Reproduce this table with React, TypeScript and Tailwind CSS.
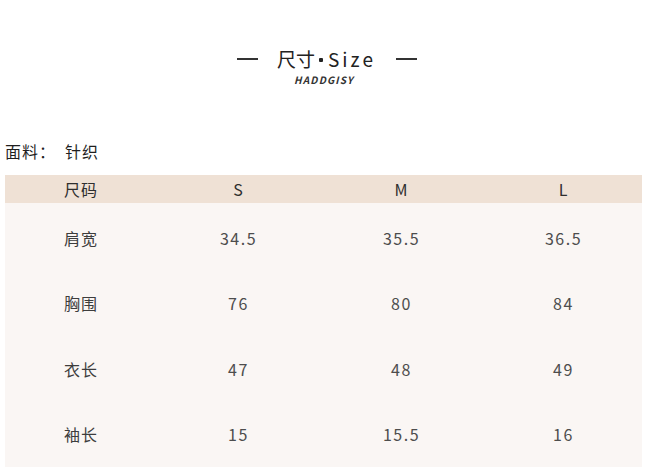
import React from "react";

const rows = [
  { label: "肩宽", v: ["34.5", "35.5", "36.5"] },
  { label: "胸围", v: ["76", "80", "84"] },
  { label: "衣长", v: ["47", "48", "49"] },
  { label: "袖长", v: ["15", "15.5", "16"] },
];

export default function App() {
  return (
    <div
      className="w-[647px] h-[468px] bg-white overflow-hidden flex flex-col"
      style={{ fontFamily: '"Noto Sans CJK SC", "Noto Sans", sans-serif' }}
    >
      <div className="pt-[48px] flex items-center h-[70px] text-[#222]">
        <div className="ml-[237px] w-[21px] h-[1.5px] bg-[#333]" />
        <div className="ml-[19px] flex items-center text-[19px] leading-[22px]">
          <span>尺寸</span>
          <span className="ml-[4px] mt-[2px] w-[4px] h-[4px] rounded-[1px] bg-[#222] inline-block" />
          <span className="ml-[5px] tracking-[3px]">Size</span>
        </div>
        <div className="ml-[20px] w-[21px] h-[1.5px] bg-[#333]" />
      </div>
      <div className="flex justify-center mt-[5px] pl-[1px]">
        <span className="text-[10px] leading-[10px] font-bold italic tracking-[1.2px] text-[#333]">
          HADDGISY
        </span>
      </div>
      <div className="mt-[56px] pl-[5px] text-[16px] leading-[20px] text-[#1f1f1f] tracking-[1px] flex">
        <span>面料：</span>
        <span className="ml-[9px]">针织</span>
      </div>
      <div className="mt-[14px] mx-[5px] flex flex-col">
        <div className="grid grid-cols-[152px_163px_163px_161px] h-[28px] items-center bg-[#efe1d5] text-[16px] text-[#2e2e2e] tracking-[1px]">
          <div className="text-center">尺码</div>
          <div className="text-center">S</div>
          <div className="text-center">M</div>
          <div className="text-center">L</div>
        </div>
        <div className="bg-[#faf6f4] pt-[2px] h-[264px] flex flex-col">
          {rows.map((r) => (
            <div
              key={r.label}
              className="grid grid-cols-[152px_163px_163px_161px] h-[66px] items-center text-[16px] text-[#4d4d4d] tracking-[1.5px]"
            >
              <div className="text-center text-[#3d3d3d] tracking-[1px]">{r.label}</div>
              {r.v.map((x, i) => (
                <div key={i} className="text-center">
                  {x}
                </div>
              ))}
            </div>
          ))}
        </div>
      </div>
    </div>
  );
}
